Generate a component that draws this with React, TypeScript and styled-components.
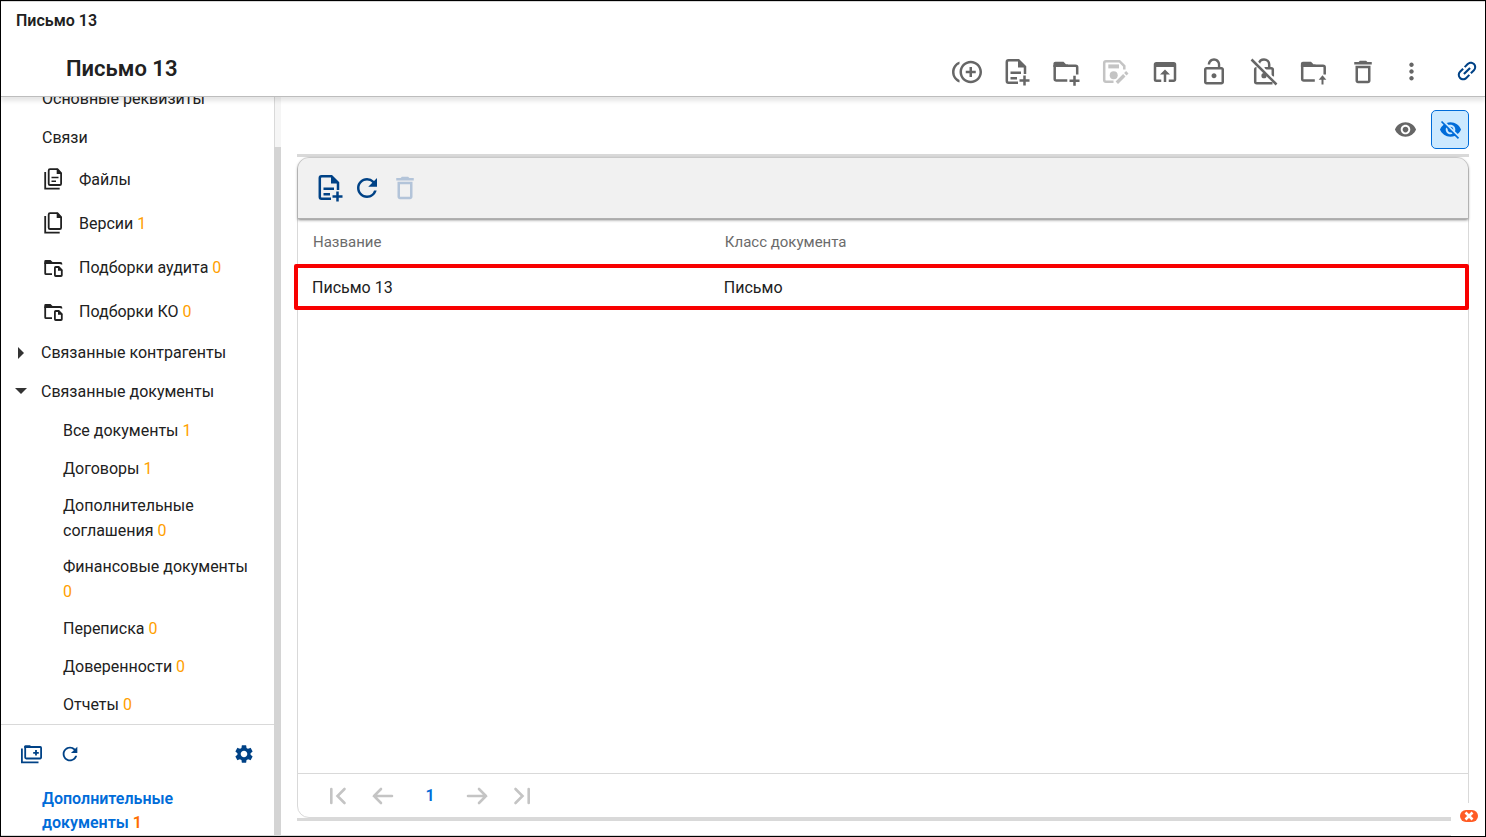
import React from 'react';
import styled, { createGlobalStyle, css } from 'styled-components';
import {
  MdControlPointDuplicate,
  MdOutlineOpenInBrowser,
  MdLockOpen,
  MdDeleteOutline,
  MdMoreVert,
  MdLink,
  MdVisibility,
  MdVisibilityOff,
  MdRefresh,
  MdSettings,
} from 'react-icons/md';

const color = {
  text: '#212121',
  grey: '#666666',
  disabled: '#c4c4c4',
  navy: '#004286',
  blue: '#006cd9',
  line: '#d9d9d9',
  amber: '#ffa000',
  orange: '#ff6d00',
};

const GlobalStyle = createGlobalStyle`
  *, *::before, *::after { box-sizing: border-box; }
  body {
    margin: 0;
    background: #fff;
    color: ${color.text};
    font-family: Roboto, "Liberation Sans", sans-serif;
    font-size: 16px;
  }
`;

const Frame = styled.div`
  position: relative;
  display: flex;
  flex-direction: column;
  height: 100vh;
  border: 1px solid #000;
  background: #fff;
  overflow: hidden;
`;

const WindowTitle = styled.div`
  flex: none;
  height: 40px;
  padding: 0 15px;
  border-top: 1px solid ${color.line};
  font-size: 16px;
  font-weight: 600;
  line-height: 38px;
`;

const Header = styled.header`
  flex: none;
  display: flex;
  align-items: center;
  height: 56px;
  padding-left: 65px;
  border-bottom: 1px solid #bdbdbd;
  box-shadow: 0 4px 4px rgba(0, 0, 0, 0.1);
  background: #fff;
  z-index: 1;
`;

const Title = styled.h1`
  flex: 1;
  margin: 0;
  font-size: 22px;
  font-weight: 600;
  line-height: 56px;
`;

const Actions = styled.div`
  display: flex;
  justify-content: space-between;
  width: 475px;
  margin: 6px 25px 0 0;
`;

const IconButton = styled.button<{ $size?: number; $color?: string }>`
  flex: none;
  display: flex;
  align-items: center;
  justify-content: center;
  width: ${(p) => p.$size ?? 30}px;
  height: ${(p) => p.$size ?? 30}px;
  padding: 0;
  border: 0;
  background: none;
  color: ${(p) => p.$color ?? color.grey};
  cursor: pointer;

  &:disabled {
    cursor: default;
  }
`;

const LinkButton = styled(IconButton)`
  margin: 4px 3px 0 0;

  svg {
    transform: rotate(-45deg);
  }
`;

const Body = styled.div`
  flex: 1;
  display: flex;
  min-height: 0;
  border-bottom: 1px solid ${color.line};
`;

const Sidebar = styled.aside`
  flex: none;
  display: flex;
  flex-direction: column;
  width: 273px;
`;

const Tree = styled.nav`
  flex: 1;
  display: flex;
  flex-direction: column;
  justify-content: flex-end;
  min-height: 0;
  padding-bottom: 1px;
  overflow: hidden;
`;

const TreeItem = styled.a<{ $level: 'section' | 'icon' | 'group' | 'leaf' }>`
  flex: none;
  display: flex;
  align-items: center;
  color: inherit;
  line-height: 25px;
  text-decoration: none;
  ${(p) =>
    ({
      section: css`
        min-height: 39px;
        padding-left: 41px;
      `,
      icon: css`
        gap: 13px;
        min-height: 44px;
        padding-left: 41px;
      `,
      group: css`
        gap: 10px;
        min-height: 39px;
        padding-left: 10px;
      `,
      leaf: css`
        min-height: 38px;
        padding: 6px 16px 5px 62px;
      `,
    })[p.$level]}
`;

const Count = styled.span`
  color: ${color.amber};
`;

const SidebarFooter = styled.div`
  flex: none;
  height: 111px;
  border-top: 1px solid ${color.line};
`;

const SidebarTools = styled.div`
  display: flex;
  align-items: center;
  gap: 15px;
  padding: 17px 18px 0;

  button:last-child {
    margin-left: auto;
  }
`;

const CurrentLink = styled.a`
  display: block;
  padding: 21px 60px 0 41px;
  color: ${color.blue};
  font-weight: 600;
  line-height: 24px;
  text-decoration: none;

  ${Count} {
    color: ${color.orange};
  }
`;

const ScrollTrack = styled.div`
  flex: none;
  width: 7px;
  padding-top: 50px;
  border-left: 1px solid ${color.line};
  background: #f5f5f5;
`;

const ScrollThumb = styled.div`
  height: 100%;
  margin-left: -1px;
  background: #d4d4d4;
`;

const Main = styled.main`
  flex: 1;
  display: flex;
  flex-direction: column;
  min-width: 0;
  padding: 13px 16px 14px;
`;

const ViewSwitch = styled.div`
  display: flex;
  justify-content: flex-end;
  gap: 7px;
  padding-bottom: 5px;
`;

const ViewButton = styled.button<{ $active?: boolean }>`
  display: flex;
  align-items: center;
  justify-content: center;
  width: 38px;
  height: 39px;
  padding: 0;
  border: 1px solid ${(p) => (p.$active ? color.blue : 'transparent')};
  border-radius: 5px;
  background: ${(p) => (p.$active ? '#cce9ff' : 'none')};
  color: ${(p) => (p.$active ? color.blue : color.grey)};
`;

const Divider = styled.div`
  flex: none;
  height: 3px;
  background: ${color.line};
`;

const Panel = styled.section`
  flex: 1;
  display: flex;
  flex-direction: column;
  border: 1px solid ${color.line};
  border-radius: 12px;
`;

const PanelToolbar = styled.div`
  display: flex;
  align-items: center;
  gap: 8px;
  height: 61px;
  padding-left: 16px;
  border-bottom: 1px solid #b0b0b0;
  border-radius: 11px 11px 0 0;
  background: #f1f1f1;
  box-shadow: 0 1px 3px rgba(0, 0, 0, 0.5);
`;

const TableArea = styled.div`
  position: relative;
  flex: 1;
`;

const Table = styled.table`
  width: 100%;
  border-collapse: collapse;
  table-layout: fixed;

  th,
  td {
    height: 45px;
    padding: 0 15px;
    text-align: left;
  }

  th {
    color: #6b6b6b;
    font-size: 15px;
    font-weight: 400;
  }

  td {
    height: 47px;
    padding: 0 14px;
  }

  th:first-child {
    width: 35.2%;
  }
`;

const RowMarker = styled.div`
  position: absolute;
  top: 45px;
  right: -1px;
  left: -4px;
  height: 46px;
  border: 4px solid #f80000;
  border-radius: 2px;
  pointer-events: none;
`;

const Pager = styled.nav`
  display: flex;
  align-items: center;
  gap: 20px;
  height: 44px;
  padding-left: 28px;
  border-top: 1px solid ${color.line};
`;

const PageNumber = styled.button`
  width: 32px;
  padding: 0;
  border: 0;
  background: none;
  color: ${color.blue};
  font: 600 16px Roboto, "Liberation Sans", sans-serif;
`;

const StatusCorner = styled.div`
  position: absolute;
  right: 0;
  bottom: 0;
  width: 34px;
  height: 33px;
  padding: 7px 0 0 9px;
  background: #fff;
`;

const CloseBadge = styled.button`
  display: flex;
  align-items: center;
  justify-content: center;
  width: 18px;
  height: 12px;
  padding: 0;
  border: 0;
  border-radius: 6px;
  background: #ff5c26;
`;

type StrokeProps = { size?: number; width?: number; children: React.ReactNode };

const Stroke = ({ size = 30, width = 2.5, children }: StrokeProps) => (
  <svg
    width={size}
    height={size}
    viewBox={`0 0 ${size} ${size}`}
    fill="none"
    stroke="currentColor"
    strokeWidth={width}
    aria-hidden="true"
  >
    {children}
  </svg>
);

const DocumentAddIcon = () => (
  <Stroke>
    <g transform="translate(1.5 0)">
      <path d="M15.5 25.7H6Q4.3 25.7 4.3 24V5Q4.3 3.3 6 3.3H16L22.5 9.8V17" />
      <path d="M15.5 2.5V10.5H23.5Z" fill="currentColor" stroke="none" />
      <path d="M8 15.7H18.5M8 21.2H14.5M22 18.5V28.5M17 23.5H27" />
    </g>
  </Stroke>
);

const FolderOutline = () => (
  <>
    <path d="M15.3 23.5H4.3Q2.7 23.5 2.7 22V8M14 8.7H23.5Q25.2 8.7 25.2 10.3V17.5" />
    <path d="M1.4 9.9V6.5Q1.4 4.7 3.4 4.7H11.5L14.2 7.4H16V9.9Z" fill="currentColor" stroke="none" />
  </>
);

const FolderAddIcon = () => (
  <Stroke>
    <g transform="translate(1 0)">
      <FolderOutline />
      <path d="M22.5 18.7V28.7M17.5 23.7H27.5" />
    </g>
  </Stroke>
);

const FolderUploadIcon = () => (
  <Stroke>
    <g transform="translate(1.5 0)">
      <FolderOutline />
    </g>
    <path d="M24.5 27.5V21" strokeWidth="2" />
    <path d="M20.7 22.7L24.5 18.3L28.3 22.7Z" fill="currentColor" stroke="none" />
  </Stroke>
);

const SaveEditIcon = () => (
  <Stroke>
    <path d="M13.5 24.7H6Q4.2 24.7 4.2 23V6Q4.2 4.2 6 4.2H19.5L24.3 9V12.5" />
    <path d="M8.3 7.4H19V11.4H8.3Z" fill="currentColor" stroke="none" />
    <circle cx="13.7" cy="18.3" r="4" fill="currentColor" stroke="none" />
    <path d="M16.8 25.7L24.3 18.2M25.3 17.2L27.3 15.2" strokeWidth="3.4" />
  </Stroke>
);

const LockOffIcon = () => (
  <Stroke>
    <path d="M9.8 6.8C10.4 4.2 12.4 2.5 15 2.5C17.9 2.5 20.2 4.8 20.2 7.5V11.2M15.5 11.2H22.2Q23.8 11.2 23.8 12.8V19.5M7.5 11.2Q6.2 11.2 6.2 12.8V24.7Q6.2 26.2 7.8 26.2H23.5" />
    <circle cx="15" cy="18.7" r="2.6" fill="currentColor" stroke="none" />
    <path d="M4.5 1.5L29 26" stroke="#fff" strokeWidth="2" />
    <path d="M2.5 2.5L27.5 27.5" />
  </Stroke>
);

const FilesIcon = ({ lined }: { lined?: boolean }) => (
  <Stroke size={24} width={1.8}>
    <path d="M3.2 5V21.6H17.7" />
    <path d="M15.5 2.2H8Q6.7 2.2 6.7 3.5V16.7Q6.7 18 8 18H17.8Q19.1 18 19.1 16.7V6Z" />
    <path d="M14.7 1.5V7H20.1Z" fill="currentColor" stroke="none" />
    {lined && <path d="M9.5 10.4H16.5M9.5 14.2H14" strokeWidth="1.5" />}
  </Stroke>
);

const FolderDocIcon = () => (
  <Stroke size={24} width={1.8}>
    <path d="M10 19.2H4Q3.2 19.2 3.2 18.4V7.5M9 8H18.5Q19.5 8 19.5 9.5" />
    <path d="M2.3 9V6.3Q2.3 5.1 3.5 5.1H8.5L10.5 7.1H12V9Z" fill="currentColor" stroke="none" />
    <path d="M16.7 12H13.7Q12.9 12 12.9 12.8V20.2Q12.9 21 13.7 21H19Q19.8 21 19.8 20.2V15.1Z" />
    <path d="M16 11.3V15.8H20.5Z" fill="currentColor" stroke="none" />
  </Stroke>
);

const FolderStackIcon = () => (
  <Stroke size={24} width={1.8}>
    <path d="M2.9 6.5V20.3H19.5" />
    <path d="M6.2 5H21.3Q22.1 5 22.1 6V15.6Q22.1 16.5 21.3 16.5H7.2Q6.2 16.5 6.2 15.6Z" />
    <path d="M5.3 6V4.3Q5.3 3.2 6.5 3.2H11L13 5V6Z" fill="currentColor" stroke="none" />
    <path d="M17 8V13.6M14.2 10.8H19.8" />
  </Stroke>
);

const Caret = ({ open }: { open?: boolean }) => (
  <svg width="20" height="20" viewBox="0 0 20 20" fill="#333" aria-hidden="true">
    <path d={open ? 'M4 6H16L10 12Z' : 'M7 4L13 10L7 16Z'} />
  </svg>
);

const PagerIcon = ({ d }: { d: string }) => (
  <svg
    width="24"
    height="24"
    viewBox="0 0 24 24"
    fill="none"
    stroke="currentColor"
    strokeWidth="2.6"
    strokeLinecap="round"
    aria-hidden="true"
  >
    <path d={d} />
  </svg>
);

const headerActions = [
  { label: 'Создать копию', icon: <MdControlPointDuplicate size={30} /> },
  { label: 'Добавить документ', icon: <DocumentAddIcon /> },
  { label: 'Добавить папку', icon: <FolderAddIcon /> },
  { label: 'Сохранить', icon: <SaveEditIcon />, disabled: true },
  { label: 'Открыть', icon: <MdOutlineOpenInBrowser size={30} /> },
  { label: 'Разблокировать', icon: <MdLockOpen size={30} /> },
  { label: 'Снять защиту', icon: <LockOffIcon /> },
  { label: 'Переместить', icon: <FolderUploadIcon /> },
  { label: 'Удалить', icon: <MdDeleteOutline size={30} /> },
  { label: 'Ещё', icon: <MdMoreVert size={27} /> },
];

const iconItems = [
  { label: 'Файлы', icon: <FilesIcon lined /> },
  { label: 'Версии', icon: <FilesIcon />, count: 1 },
  { label: 'Подборки аудита', icon: <FolderDocIcon />, count: 0 },
  { label: 'Подборки КО', icon: <FolderDocIcon />, count: 0 },
];

const leafItems = [
  { label: 'Все документы', count: 1 },
  { label: 'Договоры', count: 1 },
  { label: 'Дополнительные соглашения', count: 0 },
  { label: 'Финансовые документы', count: 0 },
  { label: 'Переписка', count: 0 },
  { label: 'Доверенности', count: 0 },
  { label: 'Отчеты', count: 0 },
];

const Label = ({ label, count }: { label: string; count?: number }) => (
  <span>
    {label}
    {count !== undefined && (
      <>
        {' '}
        <Count>{count}</Count>
      </>
    )}
  </span>
);

export default function App() {
  return (
    <>
      <GlobalStyle />
      <Frame>
        <WindowTitle>Письмо 13</WindowTitle>
        <Header>
          <Title>Письмо 13</Title>
          <Actions>
            {headerActions.map((a) => (
              <IconButton
                key={a.label}
                aria-label={a.label}
                disabled={a.disabled}
                $color={a.disabled ? color.disabled : color.grey}
              >
                {a.icon}
              </IconButton>
            ))}
          </Actions>
          <LinkButton aria-label="Ссылка" $color={color.navy}>
            <MdLink size={26} />
          </LinkButton>
        </Header>
        <Body>
          <Sidebar>
            <Tree>
              <TreeItem href="#main" $level="section">Основные реквизиты</TreeItem>
              <TreeItem href="#links" $level="section">Связи</TreeItem>
              {iconItems.map((item) => (
                <TreeItem key={item.label} href="#item" $level="icon">
                  {item.icon}
                  <Label label={item.label} count={item.count} />
                </TreeItem>
              ))}
              <TreeItem href="#partners" $level="group">
                <Caret />
                Связанные контрагенты
              </TreeItem>
              <TreeItem href="#documents" $level="group">
                <Caret open />
                Связанные документы
              </TreeItem>
              {leafItems.map((item) => (
                <TreeItem key={item.label} href="#leaf" $level="leaf">
                  <Label label={item.label} count={item.count} />
                </TreeItem>
              ))}
            </Tree>
            <SidebarFooter>
              <SidebarTools>
                <IconButton $size={24} $color={color.navy} aria-label="Добавить раздел">
                  <FolderStackIcon />
                </IconButton>
                <IconButton $size={24} $color={color.navy} aria-label="Обновить разделы">
                  <MdRefresh size={22} />
                </IconButton>
                <IconButton $size={24} $color={color.navy} aria-label="Настройки">
                  <MdSettings size={22} />
                </IconButton>
              </SidebarTools>
              <CurrentLink href="#extra">
                Дополнительные документы <Count>1</Count>
              </CurrentLink>
            </SidebarFooter>
          </Sidebar>
          <ScrollTrack>
            <ScrollThumb />
          </ScrollTrack>
          <Main>
            <ViewSwitch>
              <ViewButton aria-label="Показать">
                <MdVisibility size={23} />
              </ViewButton>
              <ViewButton $active aria-label="Скрыть">
                <MdVisibilityOff size={23} />
              </ViewButton>
            </ViewSwitch>
            <Divider />
            <Panel>
              <PanelToolbar>
                <IconButton $color={color.navy} aria-label="Создать документ">
                  <DocumentAddIcon />
                </IconButton>
                <IconButton $color={color.navy} aria-label="Обновить">
                  <MdRefresh size={30} />
                </IconButton>
                <IconButton $color="#b3c4d9" aria-label="Удалить документ" disabled>
                  <MdDeleteOutline size={30} />
                </IconButton>
              </PanelToolbar>
              <TableArea>
                <Table>
                  <thead>
                    <tr>
                      <th>Название</th>
                      <th>Класс документа</th>
                    </tr>
                  </thead>
                  <tbody>
                    <tr>
                      <td>Письмо 13</td>
                      <td>Письмо</td>
                    </tr>
                  </tbody>
                </Table>
                <RowMarker />
              </TableArea>
              <Pager aria-label="Страницы">
                <IconButton $size={24} $color={color.disabled} aria-label="Первая страница" disabled>
                  <PagerIcon d="M5.3 5V19M18.5 5L11.5 12L18.5 19" />
                </IconButton>
                <IconButton $size={24} $color={color.disabled} aria-label="Предыдущая страница" disabled>
                  <PagerIcon d="M22 12H4M11 5L4 12L11 19" />
                </IconButton>
                <PageNumber>1</PageNumber>
                <IconButton $size={24} $color={color.disabled} aria-label="Следующая страница" disabled>
                  <PagerIcon d="M2 12H20M13 5L20 12L13 19" />
                </IconButton>
                <IconButton $size={24} $color={color.disabled} aria-label="Последняя страница" disabled>
                  <PagerIcon d="M18.7 5V19M5.5 5L12.5 12L5.5 19" />
                </IconButton>
              </Pager>
            </Panel>
            <Divider />
          </Main>
        </Body>
        <StatusCorner>
          <CloseBadge aria-label="Закрыть">
            <svg width="10" height="10" viewBox="0 0 10 10" stroke="#fff" strokeWidth="2.6" aria-hidden="true">
              <path d="M1.5 1.5L8.5 8.5M8.5 1.5L1.5 8.5" />
            </svg>
          </CloseBadge>
        </StatusCorner>
      </Frame>
    </>
  );
}
